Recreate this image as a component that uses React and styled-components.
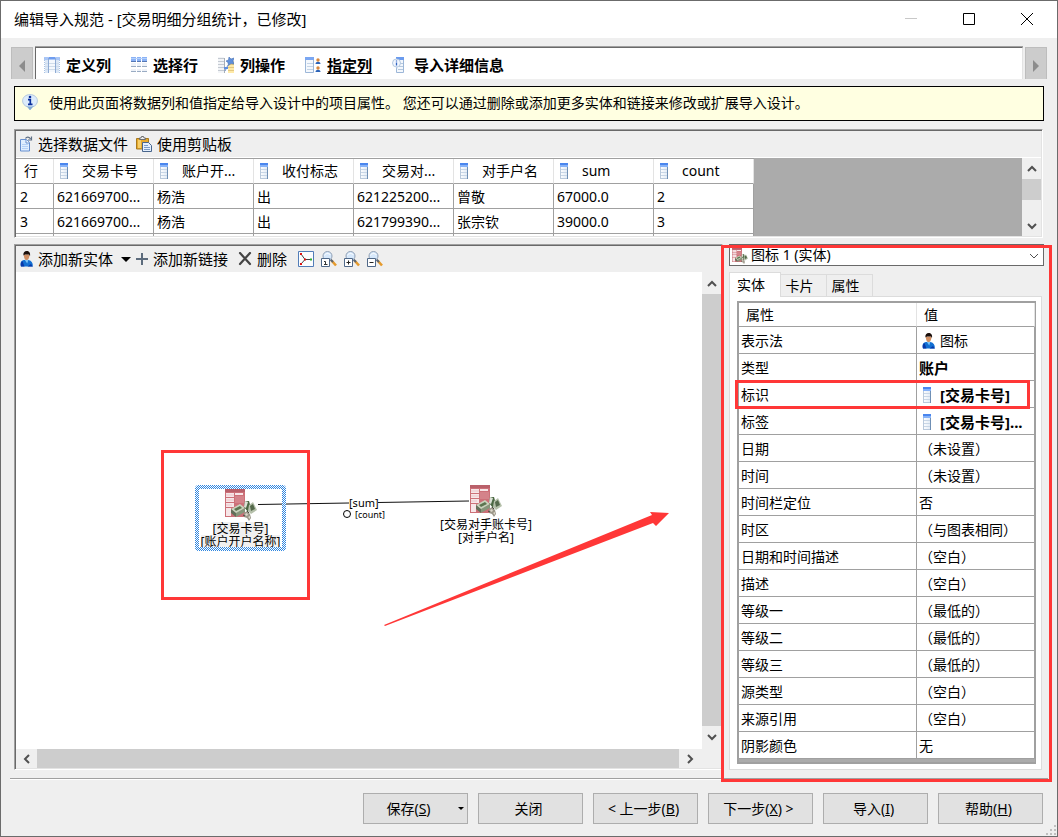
import React from "react";
import styled, { createGlobalStyle, css } from "styled-components";

const GlobalStyle = createGlobalStyle`
  *, *::before, *::after { box-sizing: border-box; }
  body { margin: 0; background: #efefef; }
  body, button, select {
    font-family: "Noto Sans", "Noto Sans CJK SC", sans-serif;
    font-size: 14px;
    line-height: 20px;
    color: #000;
  }
  button { margin: 0; padding: 0; border: 0; background: none; }
  svg { display: block; flex: none; }
`;

const GRAY = "#a0a0a0";
const RED = "#ff3737";

const sunken = css`
  border: 1px solid;
  border-color: ${GRAY} #fff #fff ${GRAY};
  padding: 1px;
  box-shadow: inset 1px 1px #696969, inset -1px -1px #e3e3e3;
`;

/* ---------- window ---------- */

const Window = styled.div`
  display: flex;
  flex-direction: column;
  min-height: 100vh;
  min-width: 960px;
  border: 1px solid #6b6b6b;
  background: #efefef;
  position: relative;
`;

const TitleBar = styled.header`
  display: flex;
  align-items: center;
  height: 37px;
  padding: 0 1px 1px 13px;
  background: #fff;
`;

const Title = styled.h1`
  flex: 1;
  margin: 0;
  font-size: 15px;
  font-weight: 400;
`;

const WindowButton = styled.button`
  display: flex;
  align-items: center;
  justify-content: center;
  width: 58px;
  height: 36px;
`;

const WindowButtons = styled.div`
  display: flex;
`;

/* ---------- step navigation ---------- */

const StepBar = styled.div`
  display: flex;
  gap: 2px;
  margin: 9px 10px 0;
  height: 32px;
`;

const StepScroll = styled.button`
  display: flex;
  align-items: center;
  justify-content: center;
  width: 22px;
  padding-top: 5px;
  background: #ccc;
  border: 1px solid #bdbdbd;
  border-bottom: 0;
`;

const Steps = styled.nav`
  flex: 1;
  display: flex;
  align-items: center;
  gap: 20px;
  padding: 3px 0 0 8px;
  background: #fff;
  border-top: 1px solid #696969;
  border-left: 1px solid #696969;
  border-right: 1px solid #e3e3e3;
  box-shadow: 0 -1px ${GRAY};
`;

const Step = styled.button`
  display: flex;
  align-items: center;
  gap: 6px;
  font-size: 15px;
  font-weight: 700;
  text-decoration: ${(p) => (p.$current ? "underline" : "none")};
  text-underline-offset: 2px;
`;

const InfoBar = styled.p`
  display: flex;
  align-items: center;
  gap: 11px;
  height: 35px;
  margin: 7px 13px 0;
  padding: 0 7px 2px;
  border: 1px solid #000;
  background: #ffffe1;
`;

/* ---------- data preview ---------- */

const DataPanel = styled.section`
  ${sunken}
  margin: 8px 14px 0 13px;
`;

const Toolbar = styled.div`
  display: flex;
  align-items: center;
  gap: 8px;
  height: 26px;
  padding: 0 4px;
`;

const ToolButton = styled.button`
  display: flex;
  align-items: center;
  gap: 5px;
  font-size: 15px;
`;

const IconTools = styled.div`
  display: flex;
  gap: 7px;
  padding-left: 3px;
`;

const DataArea = styled.div`
  display: flex;
  height: 79px;
  background: #ababab;
  border-top: 1px solid #fff;
`;

const TableClip = styled.div`
  flex: 1;
  overflow: hidden;
`;

const DataTable = styled.table`
  table-layout: fixed;
  width: 738px;
  border-spacing: 0;
  border-top: 1px solid ${GRAY};
  background: #fff;

  th, td {
    height: 25px;
    padding: 0 3px;
    border-right: 1px solid ${GRAY};
    border-bottom: 1px solid ${GRAY};
    text-align: left;
    font-weight: 400;
    white-space: nowrap;
    overflow: hidden;
  }
  td { padding-top: 2px; }
  th { border-right-color: #e3e3e3; }
  th:first-child { width: 38px; padding-left: 8px; }
  td:first-child { padding-left: 4px; }
`;

const ColumnHead = styled.span`
  display: flex;
  align-items: center;
  gap: 13px;
  padding-left: 2px;
`;

/* ---------- scroll bars ---------- */

const VScroll = styled.div`
  display: flex;
  flex-direction: column;
  width: 19px;
  padding: ${(p) => (p.$inset ? "1px 0 2px" : "0")};
  background: #efefef;
`;

const HScroll = styled.div`
  display: flex;
  height: 19px;
  background: #efefef;
  margin-right: 21px;
`;

const ScrollArrow = styled.button`
  display: flex;
  align-items: center;
  justify-content: center;
  flex: none;
  width: ${(p) => (p.$wide ? "21px" : "auto")};
  height: ${(p) => (p.$wide ? "auto" : "21px")};
`;

const Thumb = styled.div`
  flex: ${(p) => (p.$short ? "0 0 21px" : "1")};
  background: #cdcdcd;
`;

const Spacer = styled.div`
  flex: 1;
`;

/* ---------- workspace ---------- */

const Workspace = styled.main`
  flex: 1;
  display: flex;
  gap: 6px;
  margin: 6px 13px 0;
`;

const DesignPanel = styled.section`
  ${sunken}
  flex: 1;
  min-width: 0;
  display: flex;
  flex-direction: column;
`;

const DesignArea = styled.div`
  flex: 1;
  display: flex;
  background: #fff;
`;

const Canvas = styled.div`
  position: relative;
  flex: 1;
  overflow: hidden;
  background: #fff;
`;

const CanvasDrawing = styled.svg`
  position: absolute;
  inset: 0;
  width: 100%;
  height: 100%;
`;

const Entity = styled.div`
  position: absolute;
  left: ${(p) => p.$x}px;
  top: ${(p) => p.$y}px;
  display: flex;
  flex-direction: column;
  align-items: center;
  width: ${(p) => p.$width}px;
  padding: 4px 0 3px;
  font-size: 12px;
  line-height: 13px;
  white-space: nowrap;

  svg { margin-bottom: 1px; }
`;

const SelectionFrame = styled.div`
  position: absolute;
  inset: 0;
  border: 4px solid transparent;
  border-radius: 3px;
  background: conic-gradient(#2f86e0 25%, #fff 0 50%, #2f86e0 0 75%, #fff 0) 0 0 / 2px 2px border-box;
  mask: linear-gradient(#000 0 0) border-box exclude, linear-gradient(#000 0 0) padding-box;
`;

const EntityLabel = styled.span`
  background: ${(p) => (p.$selected ? "#f0f0f0" : "transparent")};
`;

const LinkLabel = styled.span`
  position: absolute;
  left: ${(p) => p.$x}px;
  top: ${(p) => p.$y}px;
  font-size: ${(p) => (p.$small ? "9px" : "11px")};
  line-height: 12px;
`;

const Mark = styled.div`
  position: absolute;
  border: 3px solid ${RED};
  pointer-events: none;
`;

const EntityMark = styled(Mark)`
  left: 145px;
  top: 178px;
  width: 149px;
  height: 150px;
`;

const PanelMark = styled(Mark)`
  inset: 1px -8px -12px -8px;
`;

const RowMark = styled(Mark)`
  left: -4px;
  right: -114px;
  top: -1px;
  bottom: -2px;
  z-index: 1;
`;

/* ---------- properties ---------- */

const Properties = styled.aside`
  position: relative;
  display: flex;
  flex-direction: column;
  width: 315px;
`;

const Combo = styled.label`
  position: relative;
  display: block;
  height: 22px;

  svg { position: absolute; top: 4px; }
  svg:first-child { left: 3px; }
  svg:last-child { right: 5px; top: 7px; }
`;

const ComboSelect = styled.select`
  appearance: none;
  display: block;
  width: 100%;
  height: 22px;
  padding: 0 22px 0 21px;
  border: 1px solid #696969;
  border-radius: 0;
  background: #fff;
`;

const Tabs = styled.div`
  display: flex;
  align-items: flex-end;
  margin-top: 6px;
`;

const Tab = styled.button`
  width: ${(p) => (p.$active ? 52 : 46)}px;
  height: ${(p) => (p.$active ? 25 : 22)}px;
  padding: 0 8px 0 0;
  text-align: center;
  border: 1px solid #dcdcdc;
  border-bottom: 0;
  border-left-width: ${(p) => (p.$active ? 1 : 0)}px;
  background: ${(p) => (p.$active ? "#fff" : "#efefef")};
  margin-bottom: ${(p) => (p.$active ? -1 : 0)}px;
  z-index: 1;
`;

const TabPane = styled.div`
  flex: 1;
  margin-right: 2px;
  padding: 4px 5px 5px 7px;
  border: 1px solid #dcdcdc;
  background: #fff;
`;

const PropertyGrid = styled.div`
  height: 100%;
  border: 2px solid ${GRAY};
  border-right-width: 1px;
  background: #ababab;
`;

const PropertyTable = styled.table`
  table-layout: fixed;
  width: 100%;
  border-spacing: 0;
  background: #fff;

  th, td {
    height: 27px;
    padding: 2px 2px 0;
    border-right: 1px solid ${GRAY};
    border-bottom: 1px solid ${GRAY};
    text-align: left;
    font-weight: 400;
    white-space: nowrap;
  }
  th:first-child { width: 178px; position: relative; }
  thead th { height: 24px; padding: 0 7px; border-right-color: #e3e3e3; }
`;

const Value = styled.span`
  display: flex;
  align-items: center;
  font-size: ${(p) => (p.$bold ? 15 : 14)}px;
  font-weight: ${(p) => (p.$bold ? 700 : 400)};
`;

const ValueIcon = styled.span`
  flex: none;
  width: 21px;
  padding-left: 3px;
`;

/* ---------- footer ---------- */

const Divider = styled.hr`
  width: auto;
  height: 2px;
  margin: 8px 9px 0;
  border: 0;
  border-top: 1px solid ${GRAY};
  border-bottom: 1px solid #fff;
`;

const Footer = styled.footer`
  display: flex;
  justify-content: flex-end;
  gap: 10px;
  padding: 13px 14px 12px;
`;

const PushButton = styled.button`
  position: relative;
  width: 105px;
  height: 31px;
  padding-right: ${(p) => (p.$menu ? 14 : 4)}px;
  border: 1px solid #adadad;
  background: #e1e1e1;

  svg { position: absolute; right: 3px; top: 13px; }
`;

const Grip = styled.svg`
  position: absolute;
  right: 0;
  bottom: 0;
`;

/* ---------- icons ---------- */

const ColumnIcon = () => (
  <svg width="10" height="16" viewBox="0 0 10 16">
    <defs>
      <linearGradient id="colBody" x1="0" x2="1">
        <stop offset="0" stopColor="#fff" />
        <stop offset="1" stopColor="#dfe9f5" />
      </linearGradient>
    </defs>
    <rect x="1" y="0" width="8" height="16" fill="url(#colBody)" />
    <path d="M1 0h8v2H1z" fill="#4a86ee" />
    <path d="M1 2h8v2H1z" fill="#86b2f8" />
    <path d="M1.500 4v11.500M1 15.500h7" stroke="#b9c9dc" fill="none" />
    <path d="M8.500 4v12" stroke="#6f8fb4" />
    <path d="M2 6.500h6M2 9.500h6M2 12.500h6" stroke="#c8d6e6" />
  </svg>
);

const DefineIcon = () => (
  <svg width="16" height="16" viewBox="0 0 16 16">
    <path d="M0 0h16v3H0z" fill="#a9c6f8" />
    <path d="M1 3h3v13H1zM12 3h3v13h-3z" fill="#dbe7f6" />
    <path d="M5 3h6v12H5z" fill="#f4f8fd" />
    <path d="M5 6.500h6M5 9.500h6M5 12.500h6M1 6.500h3M12 6.500h3M1 9.500h3M12 9.500h3M1 12.500h3M12 12.500h3" stroke="#cfdcea" />
    <path d="M4.500 1v15M11.500 1v15" stroke="#8fabd3" />
    <path d="M.5 1v15M15.500 1v15" stroke="#a9c2e4" strokeDasharray="1 1" />
    <path d="M5 0h6v2H5z" fill="#6f9df0" />
  </svg>
);

const RowsIcon = () => (
  <svg width="16" height="16" viewBox="0 0 16 16">
    <path d="M0 0h16v4H0z" fill="#8ab2f6" />
    <path d="M0 6h16v4H0zM0 12h16v3H0z" fill="#eef2f8" />
    <path d="M0 4.500h16" stroke="#5577b4" />
    <path d="M0 9.500h16M0 14.500h16" stroke="#9aacc3" />
    <path d="M5.500 0v16M10.500 0v16" stroke="#fff" />
    <path d="M0 1.500h16" stroke="#b4d0fb" />
  </svg>
);

const ActionsIcon = () => (
  <svg width="16" height="16" viewBox="0 0 16 16">
    <path d="M0 0h6v16H0z" fill="#f2f4f7" />
    <path d="M0 1.500h6M0 4.500h6M0 7.500h6M0 10.500h6M0 13.500h6" stroke="#c4cad2" />
    <path d="M6.500 1v15" stroke="#a5aeb9" />
    <path d="M10 4h6v12h-6z" fill="#ffeaa8" />
    <path d="M10 7.500h6M10 10.500h6M10 13.500h6" stroke="#e4c87f" />
    <path d="m7 14 3-6" stroke="#6d90cc" />
    <path d="m11 0 2 2 3-1-1 3 1 3-3-.5-2.500 2L10 5.500 8 4l2.500-1z" fill="#5f90dc" stroke="#4a72b4" strokeWidth=".6" />
    <path d="M6 11h4" stroke="#5d8ee0" strokeWidth="2" />
  </svg>
);

const AssignIcon = () => (
  <svg width="16" height="16" viewBox="0 0 16 16">
    <path d="M.5.5h8v15h-8z" fill="#f4f8fd" stroke="#9db7d8" />
    <path d="M0 0h9v3H0z" fill="#7ba7f2" />
    <path d="M2 6.500h6M2 9.500h6M2 12.500h6" stroke="#c5d4e6" />
    <circle cx="13" cy="3" r="1.700" fill="#d8873c" />
    <path d="M10.500 7c0-3 5-3 5 0z" fill="#2b63b8" />
    <circle cx="13" cy="11" r="1.700" fill="#d8873c" />
    <path d="M10.500 15c0-3 5-3 5 0z" fill="#2b63b8" />
  </svg>
);

const DetailIcon = () => (
  <svg width="16" height="16" viewBox="0 0 16 16">
    <path d="M4.500.5h7v15h-7z" fill="#f4f8fd" stroke="#9db7d8" />
    <path d="M4 0h8v3H4z" fill="#6b9bee" />
    <path d="M7 6.500h4M7 9.500h4M6 12.500h5" stroke="#b5c8de" />
    <circle cx="4.500" cy="6" r="4" fill="#f2f7ff" stroke="#b4c8e0" />
    <path d="m4 9 1 3 1.500-3z" fill="#c8d8ec" />
    <path d="M4.500 3.500v1M4.500 5.500v3" stroke="#3064c0" strokeWidth="1.300" />
  </svg>
);

const InfoIcon = () => (
  <svg width="16" height="17" viewBox="0 0 16 17">
    <path d="M8 .6c4.300 0 7.400 2.700 7.400 6.300 0 3-2 5.200-5 6L8 16l-2.300-3.100C2.700 12 .6 9.900.6 6.900.6 3.300 3.700.6 8 .6z" fill="#dcebfb" stroke="#b4c8de" />
    <path d="M3 11c2 2 8 2 10 0l-2 1.800L8 16l-2.300-3z" fill="#7fa9d4" />
    <circle cx="8" cy="3" r="1.300" fill="#0a2f9c" />
    <path d="M6 5.700h2.300v4.300M6 10.300h4.500" stroke="#0a2f9c" strokeWidth="1.700" fill="none" />
  </svg>
);

const FileIcon = () => (
  <svg width="13" height="16" viewBox="0 0 13 16">
    <path d="M.5 3.500h6l3 3v8.500h-9z" fill="#dfeeff" stroke="#668fcf" />
    <path d="M2 8.500h6M2 10.500h6M2 12.500h6" stroke="#b4d0f6" />
    <path d="M6 3.500v3.500h3.500" fill="#fff" stroke="#668fcf" />
    <path d="M5.500 2.500c1-2 4-2 5 .5M11.500.5v3.500H8" fill="none" stroke="#5e6f85" strokeWidth="1.200" />
  </svg>
);

const PasteIcon = () => (
  <svg width="16" height="16" viewBox="0 0 16 16">
    <path d="M.5 2.500h12v10.500H.5z" fill="#e5a92e" stroke="#a87a1e" />
    <path d="M2 4h3v8H2z" fill="#f7cf69" />
    <path d="M3.500 3.500V2h1.500L5.500.5h2L8 2h1.500v1.500z" fill="#eee" stroke="#6d6d6d" />
    <path d="M6.500 6.500h6l3 3v6h-9z" fill="#e4effc" stroke="#48658c" />
    <path d="M8 9.500h4M8 11.500h6M8 13.500h6" stroke="#7d9cc6" />
  </svg>
);

const PersonIcon = () => (
  <svg width="13" height="16" viewBox="0 0 13 16">
    <path d="M1 15.500C0 11.500.8 9.500 4 9h4.500c3.200.8 4.500 3 4.300 6.500z" fill="#126fd2" />
    <path d="M1 15.500c-.8-2-.3-4.500 1.500-5.500l2 5.500zM7.500 15.500l3.500-2.500 1.800 2.500z" fill="#0838a8" />
    <path d="M4.500 8.500h4l-1.300 4z" fill="#7cc4f6" />
    <path d="M3.900 3.500c0 4 1 5.500 2.700 5.500s2.900-2 2.900-5.500z" fill="#d08e62" />
    <path d="M3.400 4.500C3 1.500 4.500 0 6.700 0s4 1.500 3.300 5L9 3.500H5z" fill="#1a0e0a" />
  </svg>
);

const PlusIcon = () => (
  <svg width="12" height="12" viewBox="0 0 12 12">
    <path d="M6 0v12M0 6h12" stroke="#5c6b7c" strokeWidth="2" />
  </svg>
);

const DeleteIcon = () => (
  <svg width="16" height="14" viewBox="0 0 16 14">
    <path d="m4 1 10 11M14 1 4 12" stroke="#444" strokeWidth="2.200" strokeLinecap="round" />
  </svg>
);

const Caret = ({ size = 10 }) => (
  <svg width={size} height={size / 2} viewBox="0 0 10 5">
    <path d="M0 0h10L5 5z" />
  </svg>
);

const LayoutIcon = () => (
  <svg width="16" height="16" viewBox="0 0 16 16">
    <path d="M.5.5h15v15H.5z" fill="#fbfdff" stroke="#527db8" />
    <path d="m3 3 4 5.500L3 13M7 8.500h6" fill="none" stroke="#444" />
    <path d="M2 2h2v2H2zM6 7.500h2v2H6z" fill="#d11" />
    <path d="M2 12h2v2H2z" fill="#d11" />
    <path d="M12 7.500h2v2h-2z" fill="#3a3" />
  </svg>
);

const ZoomIcon = ({ kind }) => (
  <svg width="16" height="16" viewBox="0 0 16 16">
    <path d="m10.500 9.500 4.500 5" stroke="#e59a2c" strokeWidth="2.600" />
    <path d="m9.500 8.500 2.500 2.500" stroke="#5b6675" strokeWidth="2" />
    <circle cx="6.500" cy="5" r="4.500" fill="#d6e8fb" stroke="#8f9fb4" />
    <path d="M3.500 4.500c1-2.500 4.500-2.500 6-.5" stroke="#fff" fill="none" />
    <path d="M.5 7.500h8v8h-8z" fill="#fff" stroke="#4f6888" />
    {kind === "one" && <path d="M3 10.500h1.500v3.500M3 13.500h3.500" fill="none" stroke="#333" />}
    {kind !== "one" && <path d="M2.500 11.500h4" stroke="#222" />}
    {kind === "in" && <path d="M4.500 9.500v4" stroke="#222" />}
  </svg>
);

const AccountIcon = ({ size = 32 }) => (
  <svg width={size} height={size} viewBox="0 0 32 32">
    <path d="M0 0h20v28H0z" fill="#cc7078" />
    <path d="M0 0h20v3H0z" fill="#b9606a" />
    <path d="M1 4h8v4H1zM1 9h8v4H1zM1 14h8v4H1zM1 19h5v8H1zM10 4h8v2h-8z" fill="#f7e6e8" />
    <path d="M10 7h9v7h-9z" fill="#d4838a" />
    <path d="M1 6h8M1 11h8M1 16h6" stroke="#e4b8bd" strokeWidth=".7" />
    <path d="m6 20 9-5 5 4-9 6z" fill="#c9d3bd" />
    <path d="m6 20 5 4v4l-5-4z" fill="#63705a" />
    <path d="m11 24 9-5v4l-9 5z" fill="#87967b" />
    <path d="m9 20 6-3 2 2-6 3z" fill="#5c7550" />
    <path d="m20 12 4 0 2 7-3 4-4-5z" fill="#4b6843" />
    <path d="m20 12 3 1-2 6-2-1z" fill="#dce1d7" />
    <path d="m24 16 4-3 4 8-6 4-3-3z" fill="#b5c0aa" />
    <path d="m25 17 3-2 2 5-4 2z" fill="#54694b" />
    <path d="m19 24 3-2 3 3 1 4-2 3-2-3-3-1z" fill="#9b9789" />
    <path d="m20 25 2-1 1 2-2 1zM23 28l2-1v3z" fill="#ddd8cb" />
    <path d="m22 22 2 2M18 26l2 1" stroke="#4a493d" />
  </svg>
);

const chevrons = {
  up: "M1 7 5 3l4 4",
  down: "M1 3l4 4 4-4",
  left: "M7 1 3 5l4 4",
  right: "M3 1l4 4-4 4",
};

const Chevron = ({ dir, thin }) => (
  <svg width="10" height="10" viewBox="0 0 10 10">
    <path d={chevrons[dir]} fill="none" stroke="#505050" strokeWidth={thin ? 1 : 2} />
  </svg>
);

const StepArrow = ({ back }) => (
  <svg width="6" height="12" viewBox="0 0 6 12">
    <path d={back ? "M6 0v12L0 6z" : "M0 0v12l6-6z"} fill="#8c8c8c" />
  </svg>
);

/* ---------- content ---------- */

const steps = [
  ["定义列", DefineIcon],
  ["选择行", RowsIcon],
  ["列操作", ActionsIcon],
  ["指定列", AssignIcon],
  ["导入详细信息", DetailIcon],
];

const columns = ["交易卡号", "账户开...", "收付标志", "交易对...", "对手户名", "sum", "count"];

const records = [
  ["2", "621669700...", "杨浩", "出", "621225200...", "曾敬", "67000.0", "2"],
  ["3", "621669700...", "杨浩", "出", "621799390...", "张宗钦", "39000.0", "3"],
  ["", "", "", "", "", "", "", ""],
];

const properties = [
  { name: "表示法", value: "图标", icon: PersonIcon },
  { name: "类型", value: "账户", bold: true },
  { name: "标识", value: "[交易卡号]", icon: ColumnIcon, bold: true, marked: true },
  { name: "标签", value: "[交易卡号]...", icon: ColumnIcon, bold: true },
  { name: "日期", value: "（未设置）" },
  { name: "时间", value: "（未设置）" },
  { name: "时间栏定位", value: "否" },
  { name: "时区", value: "（与图表相同）" },
  { name: "日期和时间描述", value: "（空白）" },
  { name: "描述", value: "（空白）" },
  { name: "等级一", value: "（最低的）" },
  { name: "等级二", value: "（最低的）" },
  { name: "等级三", value: "（最低的）" },
  { name: "源类型", value: "（空白）" },
  { name: "来源引用", value: "（空白）" },
  { name: "阴影颜色", value: "无" },
];

const DesignToolbar = () => (
  <Toolbar>
    <ToolButton>
      <PersonIcon />
      添加新实体
    </ToolButton>
    <ToolButton>
      <Caret />
      <PlusIcon />
      添加新链接
    </ToolButton>
    <ToolButton>
      <DeleteIcon />
      删除
    </ToolButton>
    <IconTools>
      <ToolButton aria-label="布局">
        <LayoutIcon />
      </ToolButton>
      <ToolButton aria-label="实际大小">
        <ZoomIcon kind="one" />
      </ToolButton>
      <ToolButton aria-label="放大">
        <ZoomIcon kind="in" />
      </ToolButton>
      <ToolButton aria-label="缩小">
        <ZoomIcon kind="out" />
      </ToolButton>
    </IconTools>
  </Toolbar>
);

const DesignCanvas = () => (
  <Canvas>
    <CanvasDrawing>
      <path d="M242 232.500 333 231M362 230.500l91-1.500" stroke="#111" strokeWidth="1.200" />
      <circle cx="331" cy="242" r="3.500" fill="#fff" stroke="#000" />
      <path d="m368 353 268-110-2-3 19 1-13 13-3-3-268 103z" fill={RED} />
    </CanvasDrawing>
    <Entity $x={179} $y={213} $width={91}>
      <SelectionFrame />
      <AccountIcon />
      <EntityLabel $selected>[交易卡号]</EntityLabel>
      <EntityLabel $selected>[账户开户名称]</EntityLabel>
    </Entity>
    <Entity $x={422} $y={209} $width={96}>
      <AccountIcon />
      <EntityLabel>[交易对手账卡号]</EntityLabel>
      <EntityLabel>[对手户名]</EntityLabel>
    </Entity>
    <LinkLabel $x={333} $y={225}>[sum]</LinkLabel>
    <LinkLabel $x={339} $y={237} $small>[count]</LinkLabel>
    <EntityMark />
  </Canvas>
);

export default function App() {
  return (
    <Window lang="zh-CN">
      <GlobalStyle />
      <TitleBar>
        <Title>编辑导入规范 - [交易明细分组统计，已修改]</Title>
        <WindowButtons>
          <WindowButton aria-label="最小化" disabled>
            <svg width="12" height="12"><path d="M0 5.500h12" stroke="#c8c8c8" /></svg>
          </WindowButton>
          <WindowButton aria-label="最大化">
            <svg width="12" height="12"><path d="M.5.5h11v11H.5z" fill="none" stroke="#000" /></svg>
          </WindowButton>
          <WindowButton aria-label="关闭窗口">
            <svg width="12" height="12"><path d="m0 0 12 12M12 0 0 12" stroke="#000" /></svg>
          </WindowButton>
        </WindowButtons>
      </TitleBar>

      <StepBar>
        <StepScroll aria-label="向左"><StepArrow back /></StepScroll>
        <Steps>
          {steps.map(([label, Icon]) => (
            <Step key={label} $current={label === "指定列"}>
              <Icon />
              {label}
            </Step>
          ))}
        </Steps>
        <StepScroll aria-label="向右"><StepArrow /></StepScroll>
      </StepBar>

      <InfoBar>
        <InfoIcon />
        使用此页面将数据列和值指定给导入设计中的项目属性。 您还可以通过删除或添加更多实体和链接来修改或扩展导入设计。
      </InfoBar>

      <DataPanel>
        <Toolbar>
          <ToolButton><FileIcon />选择数据文件</ToolButton>
          <ToolButton><PasteIcon />使用剪贴板</ToolButton>
        </Toolbar>
        <DataArea>
          <TableClip>
            <DataTable>
              <thead>
                <tr>
                  <th>行</th>
                  {columns.map((c) => (
                    <th key={c}>
                      <ColumnHead><ColumnIcon />{c}</ColumnHead>
                    </th>
                  ))}
                </tr>
              </thead>
              <tbody>
                {records.map((row, i) => (
                  <tr key={i}>{row.map((cell, j) => <td key={j}>{cell}</td>)}</tr>
                ))}
              </tbody>
            </DataTable>
          </TableClip>
          <VScroll>
            <ScrollArrow aria-label="向上滚动"><Chevron dir="up" /></ScrollArrow>
            <Thumb $short />
            <Spacer />
            <ScrollArrow aria-label="向下滚动"><Chevron dir="down" /></ScrollArrow>
          </VScroll>
        </DataArea>
      </DataPanel>

      <Workspace>
        <DesignPanel>
          <DesignToolbar />
          <DesignArea>
            <DesignCanvas />
            <VScroll $inset>
              <ScrollArrow aria-label="向上滚动"><Chevron dir="up" /></ScrollArrow>
              <Thumb />
              <ScrollArrow aria-label="向下滚动"><Chevron dir="down" /></ScrollArrow>
            </VScroll>
          </DesignArea>
          <HScroll>
            <ScrollArrow $wide aria-label="向左滚动"><Chevron dir="left" /></ScrollArrow>
            <Thumb />
            <ScrollArrow $wide aria-label="向右滚动"><Chevron dir="right" /></ScrollArrow>
          </HScroll>
        </DesignPanel>

        <Properties>
          <Combo>
            <AccountIcon size={16} />
            <ComboSelect aria-label="项目">
              <option>图标 1 (实体)</option>
            </ComboSelect>
            <Chevron dir="down" thin />
          </Combo>
          <Tabs role="tablist">
            <Tab role="tab" aria-selected="true" $active>实体</Tab>
            <Tab role="tab" aria-selected="false">卡片</Tab>
            <Tab role="tab" aria-selected="false">属性</Tab>
          </Tabs>
          <TabPane role="tabpanel">
            <PropertyGrid>
              <PropertyTable>
                <thead>
                  <tr><th>属性</th><th>值</th></tr>
                </thead>
                <tbody>
                  {properties.map(({ name, value, icon: Icon, bold, marked }) => (
                    <tr key={name}>
                      <th scope="row">
                        {name}
                        {marked && <RowMark />}
                      </th>
                      <td>
                        <Value $bold={bold}>
                          {Icon && <ValueIcon><Icon /></ValueIcon>}
                          {value}
                        </Value>
                      </td>
                    </tr>
                  ))}
                </tbody>
              </PropertyTable>
            </PropertyGrid>
          </TabPane>
          <PanelMark />
        </Properties>
      </Workspace>

      <Divider />
      <Footer>
        <PushButton $menu>保存(<u>S</u>)<Caret size={6} /></PushButton>
        <PushButton>关闭</PushButton>
        <PushButton>&lt; 上一步(<u>B</u>)</PushButton>
        <PushButton>下一步(<u>X</u>) &gt;</PushButton>
        <PushButton>导入(<u>I</u>)</PushButton>
        <PushButton>帮助(<u>H</u>)</PushButton>
      </Footer>
      <Grip width="12" height="12">
        <path d="M9 1h2v2H9zM9 5h2v2H9zM5 5h2v2H5zM9 9h2v2H9zM5 9h2v2H5zM1 9h2v2H1z" fill="#bfbfbf" />
      </Grip>
    </Window>
  );
}
